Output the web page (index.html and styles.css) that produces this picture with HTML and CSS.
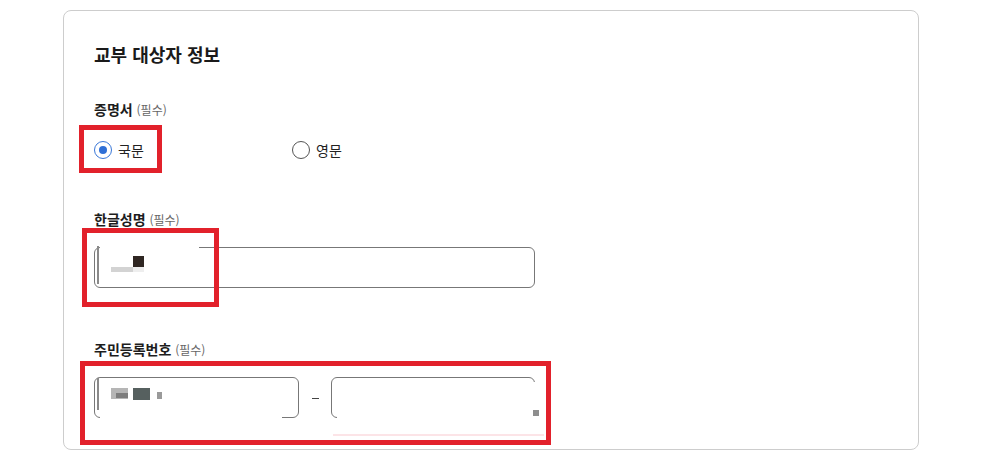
FILE: index.html
```html
<!DOCTYPE html>
<html lang="ko">
<head>
<meta charset="utf-8">
<title>교부 대상자 정보</title>
<link rel="stylesheet" href="styles.css">
</head>
<body>
<section class="card">
  <h2 class="title">교부 대상자 정보</h2>

  <div class="field field-first">
    <div class="label label-radio">증명서 <span class="req">(필수)</span></div>
    <div class="radios">
      <label class="radio"><span class="dot checked"></span><span class="rtext">국문</span></label>
      <label class="radio"><span class="dot"></span><span class="rtext">영문</span></label>
    </div>
  </div>

  <div class="field field-name">
    <div class="label">한글성명 <span class="req">(필수)</span></div>
    <div class="input name-input">
      <span class="patch name-top"></span>
      <span class="cursor name-cursor"></span>
      <span class="blob name-dark"></span>
      <span class="blob name-light1"></span>
      <span class="blob name-light2"></span>
    </div>
  </div>

  <div class="field field-rrn">
    <div class="label">주민등록번호 <span class="req">(필수)</span></div>
    <div class="rrn">
      <div class="input rrn-input">
        <span class="patch rrn1-bottom"></span>
        <span class="cursor rrn1-cursor"></span>
        <span class="blob rrn-b1"></span>
        <span class="blob rrn-b2"></span>
        <span class="blob rrn-b3"></span>
        <span class="blob rrn-b4"></span>
      </div>
      <span class="dash"></span>
      <div class="input rrn-input">
        <span class="patch rrn2-right"></span>
        <span class="patch rrn2-bottom"></span>
        <span class="blob rrn2-sq"></span>
        <span class="blob rrn2-pink"></span>
      </div>
    </div>
  </div>

  <div class="hl hl-radio"></div>
  <div class="hl hl-name"></div>
  <div class="hl hl-rrn"></div>
</section>
</body>
</html>
```

FILE: styles.css
```css
* { box-sizing: border-box; }
html, body { margin: 0; padding: 0; background: #ffffff; }
body {
  font-family: "Noto Sans CJK KR", "Noto Sans", sans-serif;
  color: #222;
  padding-top: 10px;
}
.card {
  position: relative;
  width: 856px;
  margin: 0 auto;
  border: 1px solid #cdcdcd;
  border-radius: 8px;
  padding: 30px 30px 31px 30px;
  background: #fff;
}
.title {
  margin: 0;
  font-size: 18px;
  line-height: 26px;
  font-weight: 700;
  color: #1a1a1a;
}
.field-first { margin-top: 32px; }
.field-name { margin-top: 49px; }
.field-rrn { margin-top: 51px; }
.label {
  font-size: 14px;
  line-height: 20px;
  font-weight: 700;
  color: #1d1d1d;
  margin-bottom: 17px;
}
.label-radio { margin-bottom: 20px; }
.req {
  font-size: 12px;
  font-weight: 400;
  color: #666;
}
.radios {
  display: grid;
  grid-template-columns: 198px 198px;
  height: 20px;
}
.radio {
  display: flex;
  align-items: center;
  gap: 6px;
  font-size: 14px;
  line-height: 20px;
  color: #222;
}
.dot {
  width: 18px;
  height: 18px;
  border-radius: 50%;
  border: 1px solid #555;
  display: flex;
  align-items: center;
  justify-content: center;
}
.dot.checked {
  border: 1.5px solid #3a78d8;
}
.dot.checked::after {
  content: "";
  width: 8px;
  height: 8px;
  border-radius: 50%;
  background: #2f6fd6;
}
.input {
  position: relative;
  height: 41px;
  border: 1px solid #777;
  border-radius: 6px;
  background: #fff;
}
.name-input { width: 441px; }
.rrn {
  display: grid;
  grid-template-columns: 205px 8px 204px;
  column-gap: 12px;
  align-items: center;
  width: 441px;
}
.dash {
  display: block;
  width: 7px;
  height: 1px;
  margin-top: 1px;
  background: #444;
  justify-self: center;
}
.patch { position: absolute; background: #fff; }
.cursor { position: absolute; background: #8a8a8a; width: 2px; }
.blob { position: absolute; }

.name-top { left: 5px; top: -3px; width: 99px; height: 6px; }
.name-cursor { left: 2px; top: -2px; height: 38px; }
.name-dark { left: 38px; top: 8px; width: 11px; height: 11px; background: #2f2622; }
.name-light1 { left: 16px; top: 19px; width: 22px; height: 5px; background: #d3d3d3; }
.name-light2 { left: 38px; top: 19px; width: 11px; height: 5px; background: #eeeeee; }

.rrn1-bottom { left: 5px; bottom: -3px; width: 182px; height: 6px; }
.rrn1-cursor { left: 2px; top: 0; height: 32px; }
.rrn-b1 { left: 16px; top: 10px; width: 17px; height: 11px; background: #b5b5b5; }
.rrn-b2 { left: 21px; top: 15px; width: 12px; height: 5px; background: #7d7d7d; }
.rrn-b3 { left: 38px; top: 10px; width: 17px; height: 12px; background: #56605f; }
.rrn-b4 { left: 62px; top: 14px; width: 5px; height: 7px; background: #9a9a9a; }

.rrn2-right { right: -3px; top: 4px; width: 10px; height: 40px; }
.rrn2-bottom { left: 5px; bottom: -3px; width: 200px; height: 6px; }
.rrn2-sq { left: 201px; top: 32px; width: 6px; height: 6px; background: #8e8e8e; }
.rrn2-pink { left: 1px; top: 56px; width: 211px; height: 2px; background: #fce4e7; }

.hl {
  position: absolute;
  border: 5px solid #e2212b;
}
.hl-radio { left: 15px; top: 114px; width: 83px; height: 48px; }
.hl-name { left: 18px; top: 217px; width: 137px; height: 79px; }
.hl-rrn { left: 16px; top: 350px; width: 471px; height: 84px; }
```
